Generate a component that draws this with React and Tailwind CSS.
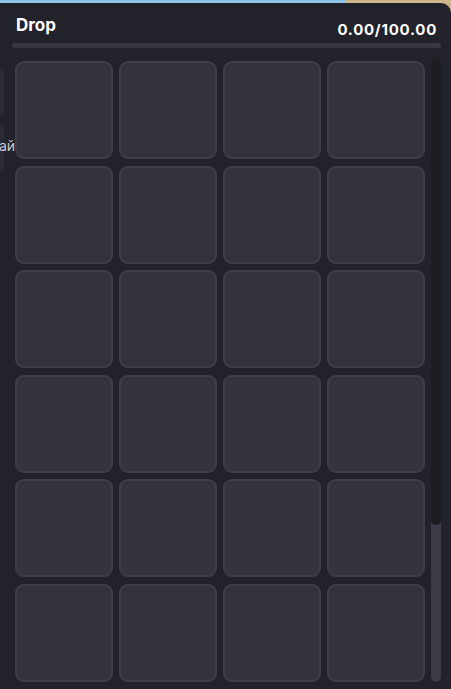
import React from "react";

const ROWS = 6;
const COLS = 4;

function Slot() {
  return (
    <div className="h-[98px] w-[98px] rounded-[9px] border-2 border-[#3e3e49] bg-[#33333d]" />
  );
}

export default function App() {
  const slots = Array.from({ length: ROWS * COLS }, (_, i) => i);

  return (
    <div
      className="relative h-[689px] w-[451px] overflow-hidden bg-[#c7b188]"
      style={{ fontFamily: "Inter, Roboto, 'Noto Sans', sans-serif" }}
    >
      {/* strip of the page behind the window */}
      <div className="flex h-[3px]">
        <div className="flex-1 bg-[#8ec4ea]" />
        <div className="w-[105px] bg-[#cdb68c]" />
      </div>

      <div className="relative h-[686px] rounded-tr-[10px] bg-[#22222b] pt-[12px]">
        {/* bits of the neighbouring panel peeking in from the left */}
        <div className="absolute left-0 top-[65px] h-[48px] w-[4px] rounded-r-[4px] bg-[#2b2b35]" />
        <div className="absolute left-0 top-[121px] h-[48px] w-[4px] rounded-r-[4px] bg-[#2b2b35]" />
        <span className="absolute left-[-1px] top-[133px] text-[14px] leading-[20px] text-[#c9c9d1]">
          ай
        </span>

        <div className="flex h-[28px] items-start justify-between pl-4 pr-[14px]">
          <h2 className="text-[17px] font-bold leading-[20px] text-white">
            Drop
          </h2>
          <span className="mt-[5px] text-[15px] font-bold leading-[20px] tracking-[0.05em] text-white">
            0.00/100.00
          </span>
        </div>

        <div className="ml-3 mr-[10px] h-[5px] rounded-full bg-[#383842]" />

        <div className="mt-[10px] flex pl-[15px] pr-[10px]">
          <div className="grid flex-1 grid-cols-[repeat(4,98px)] gap-[6px] pt-[3px]">
            {slots.map((i) => (
              <Slot key={i} />
            ))}
          </div>
          <div className="flex h-[624px] w-[10px] flex-col rounded-full bg-[#3b3b46]">
            <div className="h-[467px] rounded-full bg-[#1c1c21]" />
          </div>
        </div>
      </div>
    </div>
  );
}
